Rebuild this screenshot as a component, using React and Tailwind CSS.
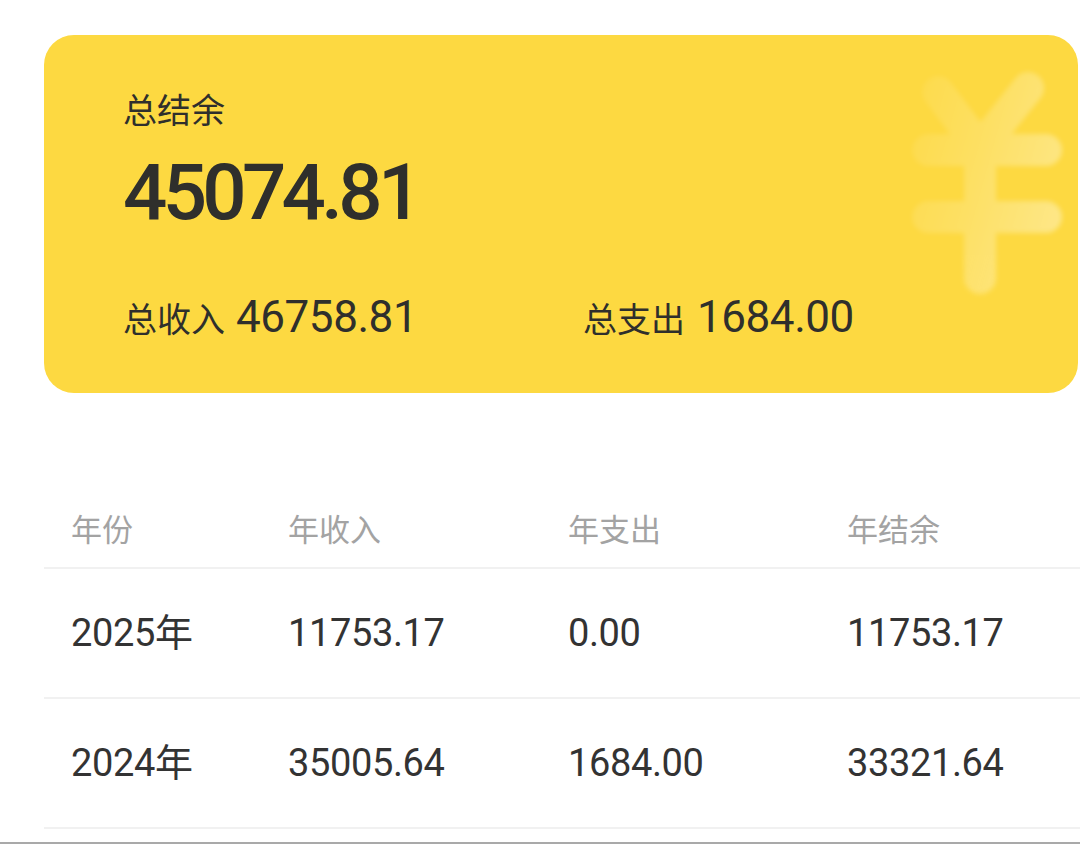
import React from "react";

function YuanMark() {
  return (
    <svg
      className="absolute left-[846px] top-[25px]"
      width="200"
      height="280"
      viewBox="0 0 200 280"
      fill="none"
    >
      <defs>
        <linearGradient id="yg" gradientUnits="userSpaceOnUse" x1="0" y1="60" x2="180" y2="110">
          <stop offset="0" stopColor="#ffffff" stopOpacity="0.1" />
          <stop offset="0.5" stopColor="#ffffff" stopOpacity="0.5" />
          <stop offset="1" stopColor="#ffffff" stopOpacity="1" />
        </linearGradient>
        <mask id="ym" maskUnits="userSpaceOnUse" x="0" y="0" width="200" height="280">
          <rect x="0" y="0" width="200" height="280" fill="url(#yg)" />
        </mask>
        <filter id="yb" x="-20%" y="-20%" width="140%" height="140%">
          <feGaussianBlur stdDeviation="2.5" />
        </filter>
      </defs>
      <g mask="url(#ym)" opacity="0.36">
        <g stroke="#ffffff" strokeWidth="32" strokeLinecap="round" filter="url(#yb)">
          <line x1="138" y1="28" x2="90" y2="88" />
          <line x1="48" y1="32" x2="90" y2="88" />
          <line x1="38" y1="90" x2="156" y2="90" />
          <line x1="38" y1="157" x2="156" y2="157" />
          <line x1="90" y1="88" x2="90" y2="218" />
        </g>
      </g>
    </svg>
  );
}

const rows = [
  { year: "2025", income: "11753.17", expense: "0.00", balance: "11753.17" },
  { year: "2024", income: "35005.64", expense: "1684.00", balance: "33321.64" },
];

export default function App() {
  return (
    <div className="h-[844px] w-[1080px] overflow-hidden bg-white flex flex-col font-['Roboto','Noto_Sans_CJK_SC',sans-serif]">
      <div className="pl-[44px] pr-[2px] pt-[35px] flex-1">
        {/* Summary card */}
        <div className="relative h-[358px] rounded-[30px] bg-[#FDD941] overflow-hidden pl-[79px] pt-[54px] text-[#2f2f2c]">
          <YuanMark />
          <div className="relative h-[40px] flex items-center text-[34px] leading-none font-['Noto_Sans_CJK_SC',sans-serif]">
            总结余
          </div>
          <div className="relative mt-[19px] h-[90px] flex items-center text-[78px] leading-none font-medium tracking-[-0.06em]">
            45074.81
          </div>
          <div className="relative mt-[57px] flex items-baseline">
            <div className="w-[460px] flex items-baseline">
              <span className="text-[34px] leading-none font-['Noto_Sans_CJK_SC',sans-serif]">总收入</span>
              <span className="ml-[11px] text-[44px] leading-none tracking-[-0.01em]">46758.81</span>
            </div>
            <div className="flex items-baseline">
              <span className="text-[34px] leading-none font-['Noto_Sans_CJK_SC',sans-serif]">总支出</span>
              <span className="ml-[12px] text-[44px] leading-none tracking-[-0.01em]">1684.00</span>
            </div>
          </div>
        </div>

        {/* Table */}
        <div className="mt-[96px] mr-[-2px]">
          <div className="grid grid-cols-[217px_280px_279px_1fr] pl-[27px] h-[80px] items-center border-b-2 border-[#f1f1f1] text-[31px] text-[#a3a3a3] font-['Noto_Sans_CJK_SC',sans-serif]">
            <div>年份</div>
            <div>年收入</div>
            <div>年支出</div>
            <div>年结余</div>
          </div>
          {rows.map((r) => (
            <div
              key={r.year}
              className="grid grid-cols-[217px_280px_279px_1fr] pl-[27px] h-[130px] items-center border-b-2 border-[#f1f1f1] text-[38px] text-[#333333] tracking-[-0.01em]"
            >
              <div>{r.year}年</div>
              <div>{r.income}</div>
              <div>{r.expense}</div>
              <div>{r.balance}</div>
            </div>
          ))}
        </div>
      </div>
      <div className="h-[2px] bg-[#a9a9a9]" />
    </div>
  );
}
